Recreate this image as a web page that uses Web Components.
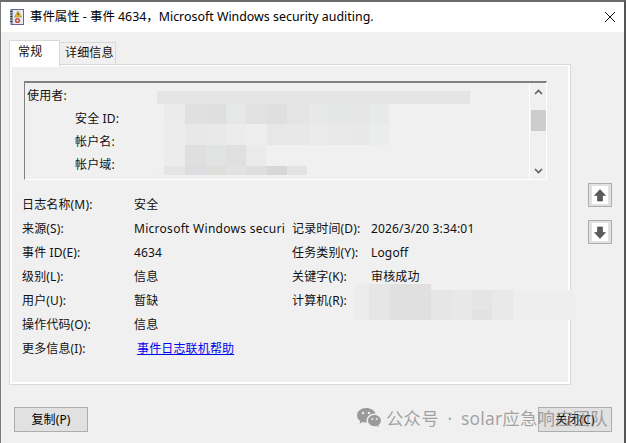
<!DOCTYPE html>
<html>
<head>
<meta charset="utf-8">
<style>
  html, body { margin: 0; padding: 0; height: 100%; overflow: hidden; background: #f0f0f0; }
  body { font: 12px/16px "Noto Sans", "Noto Sans CJK SC", sans-serif; color: #111; letter-spacing: .15px; }
</style>
</head>
<body>
<event-window>
  <event-tabs slot="tabs"></event-tabs>
  <event-panel slot="panel"></event-panel>
</event-window>

<template id="tpl-window">
  <style>
    :host { display: block; position: relative; width: 626px; height: 443px; box-sizing: border-box;
      border-top: 2px solid #6b6b6b; border-left: 1px solid #7a7a7a; border-right: 2px solid #555; overflow: hidden; }
    .title { display: flex; align-items: center; height: 30px; background: #fff; padding-left: 9px; font-size: 12.4px; letter-spacing: 0; color: #000; }
    .title svg.icon { margin-right: 6px; flex: none; }
    .title .close { margin-left: auto; margin-right: 9px; flex: none; }
    .client { padding: 8px 0 0 8px; }
    .main { display: flex; }
    .side { display: flex; flex-direction: column; gap: 13px; padding: 119px 0 0 17px; }
    .footer { display: flex; justify-content: space-between; padding: 22px 12px 0 5px; }
    x-mosaic { position: absolute; left: -1px; top: -2px; }
    .wm { position: absolute; left: 356px; top: 404px; height: 24px; display: flex; align-items: center; gap: 5px;
      font-size: 17.4px; line-height: 24px; color: rgba(110,110,110,.6); letter-spacing: .2px; word-spacing: 4px; white-space: nowrap; }
  </style>
  <div class="title">
    <svg class="icon" width="14" height="16" viewBox="0 0 14 16">
      <rect x="1" y="0.5" width="12.5" height="15" fill="#9aa6c4" stroke="#5f6b8c"/>
      <rect x="3" y="1" width="10" height="14" fill="#e8e8ee"/>
      <path d="M0 2.500h2.500M0 5h2.500M0 7.500h2.500M0 10h2.500M0 12.500h2.500" stroke="#444" stroke-width="1"/>
      <path d="M8 2 L11.500 8 H4.500 Z" fill="#f2c21c" stroke="#8f7a20" stroke-width=".5"/>
      <rect x="7.600" y="4" width="1" height="2.400" fill="#333"/>
      <circle cx="7.500" cy="11.500" r="2.600" fill="#c0504d"/>
      <circle cx="7.500" cy="11.500" r="1" fill="#eee"/>
    </svg>
    <span>事件属性 - 事件 4634，Microsoft Windows security auditing.</span>
    <svg class="close" width="10" height="10" viewBox="0 0 10 10"><path d="M0 0L10 10M10 0L0 10" stroke="#111" stroke-width="1"/></svg>
  </div>
  <div class="client">
    <slot name="tabs"></slot>
    <div class="main">
      <slot name="panel"></slot>
      <div class="side">
        <nav-arrow dir="up"></nav-arrow>
        <nav-arrow dir="down"></nav-arrow>
      </div>
    </div>
    <div class="footer">
      <win-button>复制(P)</win-button>
      <win-button>关闭(C)</win-button>
    </div>
  </div>
  <!-- redaction blocks, page coordinates -->
  <x-mosaic cells="157,91,313,13,e5e5e5;164,104,21,20,ebebeb;185,104,21,20,e0e0e0;206,104,20,20,dfdfdf;226,104,20,20,e6e8e7;246,104,21,20,e1e1e1;267,104,20,20,dfdfdf;287,104,22,20,e4e4e4;309,104,18,20,e7e8e8;327,104,22,20,e5e6e6;349,104,20,20,e6e6e6;369,104,20,20,e8eae9;164,124,21,21,ececec;185,124,21,21,e8e8e8;206,124,20,21,e9e9e9;226,124,20,21,ececec;246,124,21,21,eeeeee;267,124,20,21,e7e7e7;287,124,22,21,e8e8e8;309,124,18,21,ebebeb;327,124,22,21,e9e9e9;349,124,20,21,e8e8e8;369,124,20,21,ebedec;164,145,21,21,ececea;185,145,21,21,dfdfdf;206,145,20,21,e2e4e3;226,145,20,21,e0e0e0;246,145,20,21,e9ebea;157,166,7,9,efefef;164,166,21,9,e4e4e4;185,166,21,9,dcdde0;206,166,20,9,dededc;226,166,20,9,e1e3e2;246,166,21,9,dedede;267,166,20,9,d7d7d7;287,166,20,9,e3e3e3;354,284,15,36,ececec;369,284,21,36,e6e6e6;390,284,41,36,e0e0e0;431,290,21,30,e6e6e6;452,290,20,30,e8e8e8;472,290,20,20,e5e5e5;472,310,20,10,e2e2e2;492,290,21,30,e9e9e9;513,290,62,30,eeeeee"></x-mosaic>
  <div class="wm">
    <svg width="24" height="20" viewBox="0 0 24 20">
      <path d="M9 0C4 0 0 3.300 0 7.400c0 2.300 1.300 4.300 3.300 5.700L2.500 15.800l3.100-1.700c1 .3 2.100.5 3.400.5.300 0 .6 0 .9 0-.2-.7-.3-1.300-.3-2 0-3.900 3.600-7 8.100-7 .3 0 .6 0 .9 0C17.700 2.400 13.700 0 9 0z" fill="#9a9a9a"/>
      <circle cx="6" cy="5" r="1.200" fill="#eee"/><circle cx="12" cy="5" r="1.200" fill="#eee"/>
      <path d="M17.500 7c-3.600 0-6.500 2.500-6.500 5.600s2.900 5.600 6.500 5.600c.8 0 1.500-.1 2.200-.3l2.200 1.200-.6-2c1.600-1 2.700-2.700 2.700-4.500C24 9.500 21.100 7 17.500 7z" fill="#9a9a9a"/>
      <circle cx="15.300" cy="11" r="1" fill="#eee"/><circle cx="19.700" cy="11" r="1" fill="#eee"/>
    </svg>
    <span>公众号 · solar应急响应团队</span>
  </div>
</template>

<template id="tpl-tabs">
  <style>
    :host { display: flex; align-items: flex-start; height: 24px; position: relative; z-index: 1; }
    .tab { box-sizing: border-box; border: 1px solid #d9d9d9; }
    .on { background: #fff; border-bottom: 0; height: 27px; width: 51px; padding-left: 8px; line-height: 21px; }
    .off { background: #f0f0f0; width: 56px; height: 23px; margin-top: 2px; border-left: 0; padding-left: 5px; line-height: 20px; }
  </style>
  <div class="tab on">常规</div>
  <div class="tab off">详细信息</div>
</template>

<template id="tpl-panel">
  <style>
    :host { display: block; box-sizing: border-box; width: 562px; height: 321px; border: 1px solid #d9d9d9; }
    .inner { box-sizing: border-box; height: 100%; border: 2px solid #fff; border-top-width: 1px; padding: 15px 20px 0 12px; }
    .box { display: flex; box-sizing: border-box; height: 99px; width: 523px; border-style: solid;
      border-width: 2px 1px 1px 1px; border-color: #808080 #fff #fff #808080; overflow: hidden; }
    .msg { flex: 1; padding: 5px 0 0 2px; }
    .msg div { height: 23px; line-height: 16px; }
    .msg .in { padding-left: 48px; }
    .bar { width: 16px; flex: none; border-left: 1px solid #fff; display: flex; flex-direction: column; align-items: center; }
    .bar .up { margin-top: 6px; }
    .bar .thumb { width: 15px; height: 21px; background: #cdcdcd; margin-top: 15px; }
    .bar .down { margin-top: 37px; }
    .fields { display: grid; grid-template-columns: 112px 158px 79px 1fr; grid-auto-rows: 24px; margin: 13px 0 0 -2px; align-items: center; }
    .src { letter-spacing: .28px; white-space: nowrap; }
    a { color: #0000ee; text-decoration: underline; padding-left: 3px; white-space: nowrap; }
  </style>
  <div class="inner">
    <div class="box">
      <div class="msg">
        <div>使用者:</div>
        <div class="in">安全 ID:</div>
        <div class="in">帐户名:</div>
        <div class="in">帐户域:</div>
      </div>
      <div class="bar">
        <svg class="up" width="9" height="6" viewBox="0 0 9 6"><path d="M1 5L4.500 1.500L8 5" fill="none" stroke="#606060" stroke-width="1.600"/></svg>
        <div class="thumb"></div>
        <svg class="down" width="9" height="6" viewBox="0 0 9 6"><path d="M1 1L4.500 4.500L8 1" fill="none" stroke="#606060" stroke-width="1.600"/></svg>
      </div>
    </div>
    <div class="fields">
      <span>日志名称(M):</span><span>安全</span><span></span><span></span>
      <span>来源(S):</span><span class="src">Microsoft Windows securi</span><span>记录时间(D):</span><span>2026/3/20 3:34:01</span>
      <span>事件 ID(E):</span><span>4634</span><span>任务类别(Y):</span><span>Logoff</span>
      <span>级别(L):</span><span>信息</span><span>关键字(K):</span><span>审核成功</span>
      <span>用户(U):</span><span>暂缺</span><span>计算机(R):</span><span></span>
      <span>操作代码(O):</span><span>信息</span><span></span><span></span>
      <span>更多信息(I):</span><a href="#">事件日志联机帮助</a><span></span><span></span>
    </div>
  </div>
</template>

<template id="tpl-arrow">
  <style>
    :host { display: block; box-sizing: border-box; width: 24px; height: 24px; border: 1px solid #adadad; background: #e1e1e1; padding: 2px 3px; }
    .face { width: 16px; height: 18px; background: #fff; display: flex; align-items: center; justify-content: center; }
  </style>
  <div class="face"><svg width="12" height="13" viewBox="0 0 12 13"></svg></div>
</template>

<template id="tpl-button">
  <style>
    :host { display: flex; align-items: center; justify-content: center; box-sizing: border-box; width: 74px; height: 25px;
      border: 1px solid #adadad; background: #e1e1e1; color: #000; }
  </style>
  <slot></slot>
</template>

<script>
  function stamp(el, id) {
    el.attachShadow({ mode: 'open' }).appendChild(document.getElementById(id).content.cloneNode(true));
  }

  class EventWindow extends HTMLElement {
    constructor() { super(); stamp(this, 'tpl-window'); }
  }
  class EventTabs extends HTMLElement {
    constructor() { super(); stamp(this, 'tpl-tabs'); }
  }
  class EventPanel extends HTMLElement {
    constructor() { super(); stamp(this, 'tpl-panel'); }
  }
  class WinButton extends HTMLElement {
    constructor() { super(); stamp(this, 'tpl-button'); }
  }
  class NavArrow extends HTMLElement {
    constructor() { super(); stamp(this, 'tpl-arrow'); }
    connectedCallback() {
      const d = this.getAttribute('dir') === 'up'
        ? 'M6 0.5L11.500 6.500H8.500V12H3.500V6.500H0.500Z'
        : 'M6 12.500L11.500 6.500H8.500V1H3.500V6.500H0.500Z';
      this.shadowRoot.querySelector('svg').innerHTML = `<path d="${d}" fill="#5a5a5a" stroke="#444" stroke-width=".6"/>`;
    }
  }
  // redaction blocks: "x,y,w,h,colour;..."
  class XMosaic extends HTMLElement {
    constructor() { super(); this.attachShadow({ mode: 'open' }); }
    connectedCallback() {
      const html = this.getAttribute('cells').split(';').map((c) => {
        const [x, y, w, h, col] = c.split(',');
        return `<div style="position:absolute;left:${x}px;top:${y}px;width:${w}px;height:${h}px;background:#${col}"></div>`;
      }).join('');
      this.shadowRoot.innerHTML = `<style>:host{display:block}</style>${html}`;
    }
  }

  customElements.define('event-window', EventWindow);
  customElements.define('event-tabs', EventTabs);
  customElements.define('event-panel', EventPanel);
  customElements.define('win-button', WinButton);
  customElements.define('nav-arrow', NavArrow);
  customElements.define('x-mosaic', XMosaic);
</script>
</body>
</html>
